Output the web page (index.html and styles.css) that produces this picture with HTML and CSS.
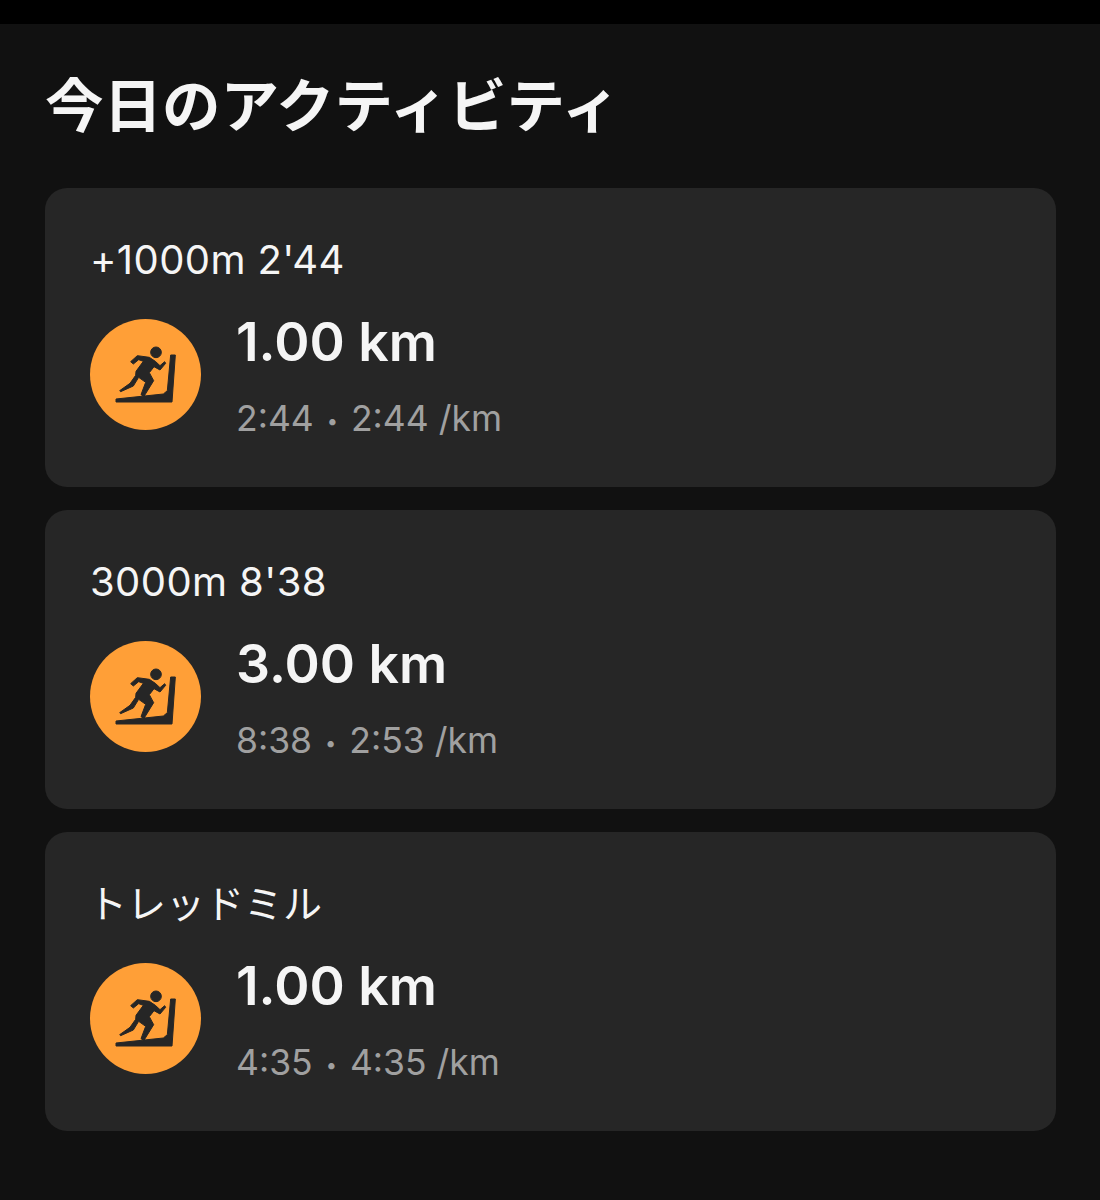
FILE: index.html
```html
<!DOCTYPE html>
<html lang="ja">
<head>
    <meta charset="UTF-8">
    <title>今日のアクティビティ</title>
    <link rel="stylesheet" href="styles.css">
</head>
<body>
    <div class="statusbar"></div>
    <main class="screen">
        <h1>今日のアクティビティ</h1>

        <section class="card">
            <div class="card-title">+1000m 2'44</div>
            <div class="card-row">
                <svg class="badge" viewBox="30 25 333 333">
                    <circle class="badge-bg" cx="196.5" cy="191.5" r="166.5"/>
                    <circle class="runner" cx="228" cy="125" r="16"/>
                    <path class="runner" d="M108 265 L250 250 L262 240 L272 133 L286 133 L276 274 L108 274 Z"/>
                    <path class="runner" d="M152 153 L172 135 L208 140 L226 152 L240 165 L254 153 L257 158 L240 178 L222 168 L208 186 L221 210 L192 257 L183 252 L197 215 L176 200 L160 226 L122 243 L119 240 L150 218 L167 194 L168 182 L190 152 L176 147 L160 160 Z"/>
                </svg>
                <div class="stats">
                    <div class="distance">1.00 km</div>
                    <div class="meta">2:44 <span class="dot">•</span> 2:44 /km</div>
                </div>
            </div>
        </section>

        <section class="card">
            <div class="card-title">3000m 8'38</div>
            <div class="card-row">
                <svg class="badge" viewBox="30 25 333 333">
                    <circle class="badge-bg" cx="196.5" cy="191.5" r="166.5"/>
                    <circle class="runner" cx="228" cy="125" r="16"/>
                    <path class="runner" d="M108 265 L250 250 L262 240 L272 133 L286 133 L276 274 L108 274 Z"/>
                    <path class="runner" d="M152 153 L172 135 L208 140 L226 152 L240 165 L254 153 L257 158 L240 178 L222 168 L208 186 L221 210 L192 257 L183 252 L197 215 L176 200 L160 226 L122 243 L119 240 L150 218 L167 194 L168 182 L190 152 L176 147 L160 160 Z"/>
                </svg>
                <div class="stats">
                    <div class="distance">3.00 km</div>
                    <div class="meta">8:38 <span class="dot">•</span> 2:53 /km</div>
                </div>
            </div>
        </section>

        <section class="card">
            <div class="card-title card-title-ja">トレッドミル</div>
            <div class="card-row">
                <svg class="badge" viewBox="30 25 333 333">
                    <circle class="badge-bg" cx="196.5" cy="191.5" r="166.5"/>
                    <circle class="runner" cx="228" cy="125" r="16"/>
                    <path class="runner" d="M108 265 L250 250 L262 240 L272 133 L286 133 L276 274 L108 274 Z"/>
                    <path class="runner" d="M152 153 L172 135 L208 140 L226 152 L240 165 L254 153 L257 158 L240 178 L222 168 L208 186 L221 210 L192 257 L183 252 L197 215 L176 200 L160 226 L122 243 L119 240 L150 218 L167 194 L168 182 L190 152 L176 147 L160 160 Z"/>
                </svg>
                <div class="stats">
                    <div class="distance">1.00 km</div>
                    <div class="meta">4:35 <span class="dot">•</span> 4:35 /km</div>
                </div>
            </div>
        </section>
    </main>
</body>
</html>
```

FILE: styles.css
```css
body {
    margin: 0;
    background-color: #111111;
    font-family: Inter, "Noto Sans CJK JP", sans-serif;
    color: #f5f5f5;
}

.statusbar {
    height: 24px;
    background-color: #000000;
}

.screen {
    padding: 39px 44px 0 45px;
}

h1 {
    margin: 0 0 48px;
    font-family: "Noto Sans CJK JP", sans-serif;
    font-size: 58.5px;
    font-weight: 700;
    line-height: 77px;
}

.card {
    box-sizing: border-box;
    height: 299px;
    margin-bottom: 23px;
    padding: 45px 45px 0;
    background-color: #262626;
    border-radius: 22px;
}

.card-title {
    font-size: 40px;
    letter-spacing: 0.4px;
    line-height: 54px;
}

.card-title-ja {
    margin-left: -2px;
    font-size: 39px;
    letter-spacing: 0;
}

.card-row {
    display: flex;
    align-items: center;
    gap: 35px;
    margin-top: 20px;
}

.badge {
    width: 111px;
    height: 111px;
    margin-bottom: 2px;
    flex-shrink: 0;
}

.badge-bg {
    fill: #ff9f37;
}

.runner {
    fill: #262626;
    stroke: #262626;
    stroke-width: 3;
    stroke-linejoin: round;
}

.stats {
    padding-top: 3px;
}

.distance {
    font-size: 53.5px;
    font-weight: 600;
    line-height: 64px;
}

.meta {
    margin-top: 23px;
    font-size: 35.5px;
    line-height: 44px;
    color: #a0a0a0;
}

.dot {
    font-size: 20px;
    margin: 0 3px;
    vertical-align: 3px;
}
```
